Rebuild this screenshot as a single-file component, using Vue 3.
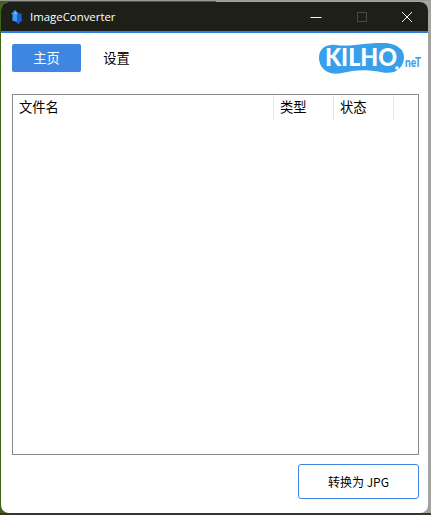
<script setup>
const columns = [
  { key: 'name', label: '文件名' },
  { key: 'type', label: '类型' },
  { key: 'status', label: '状态' },
  { key: 'rest', label: '' },
]
</script>

<template>
  <div class="desktop">
    <div class="window">
      <header class="titlebar">
        <svg class="app-icon" width="14" height="14" viewBox="0 0 14 14">
          <path d="M5 0 L9 4 H7.5 V11 H2.5 V4 H1 Z" fill="#3f9bf0" />
          <path d="M8.5 14 L13 9.5 H11.5 V3.5 H8 V11 H4 Z" fill="#1a5fcf" />
          <path d="M5 1.5 L7 4 H5 Z" fill="#8fd0fa" />
        </svg>
        <span class="app-title">ImageConverter</span>
        <div class="controls">
          <span class="ctl"><svg width="12" height="12" viewBox="0 0 12 12"><path d="M0.5 6.5H11.5" stroke="#f2f2f2" stroke-width="1" /></svg></span>
          <span class="ctl"><svg width="12" height="12" viewBox="0 0 12 12"><rect x="1.5" y="1.5" width="9" height="9" fill="none" stroke="#4a4a44" stroke-width="1" /></svg></span>
          <span class="ctl"><svg width="12" height="12" viewBox="0 0 12 12"><path d="M1 1L11 11M11 1L1 11" stroke="#f2f2f2" stroke-width="1" /></svg></span>
        </div>
      </header>

      <main class="content">
        <nav class="toolbar">
          <button class="tab active">主页</button>
          <button class="tab">设置</button>
          <svg class="logo" width="106" height="34" viewBox="0 0 106 34">
            <path d="M0 16 C0 5 9 2 17 3 C31 5 44 1 62 1 C76 0 86 7 85 16 C84 28 74 33 62 30 C46 27 35 28 23 31 C10 34 0 27 0 16 Z" fill="#38a0ea" />
            <text x="6" y="24" class="logo-main" textLength="72" lengthAdjust="spacingAndGlyphs">KILHO</text>
            <circle cx="78" cy="26" r="1.8" fill="#fff" />
            <text x="86" y="25" class="logo-sub" textLength="16" lengthAdjust="spacingAndGlyphs">neT</text>
          </svg>
        </nav>

        <section class="table">
          <div class="thead">
            <div v-for="col in columns" :key="col.key" class="th" :class="'th-' + col.key">{{ col.label }}</div>
          </div>
        </section>

        <footer class="actions">
          <button class="convert">转换为 JPG</button>
        </footer>
      </main>
    </div>
  </div>
</template>

<style>
html, body { margin: 0; padding: 0; overflow: hidden; }
</style>

<style scoped>
.desktop {
  width: 431px;
  height: 515px;
  box-sizing: border-box;
  padding: 2px 3px 2px 1px;
  background:
    linear-gradient(#9a9a96, #9a9a96) 0 0 / 100% 1px no-repeat,
    linear-gradient(#34362c, #34362c) 0 100% / 100% 2px no-repeat,
    linear-gradient(90deg, #3f6414 0 50%, #a3a3a0 50% 100%);
  font-family: "Noto Sans CJK SC", "Noto Sans", sans-serif;
}
.window {
  height: 100%;
  display: flex;
  flex-direction: column;
  border-radius: 8px;
  overflow: hidden;
  background: #fff;
}
.titlebar {
  height: 29px;
  flex: none;
  display: flex;
  align-items: center;
  padding-left: 9px;
  background: #1e1f19;
  border-bottom: 2px solid #2c7fe2;
  color: #fff;
}
.app-icon { flex: none; }
.app-title {
  margin-left: 6px;
  font-family: "Open Sans", sans-serif;
  font-size: 11.4px;
}
.controls { margin-left: auto; display: flex; gap: 3.5px; }
.ctl {
  width: 42px;
  height: 29px;
  display: flex;
  align-items: center;
  justify-content: center;
}
.content {
  flex: 1;
  min-height: 0;
  display: flex;
  flex-direction: column;
  padding: 11px 9px 14px 11px;
}
.toolbar {
  display: flex;
  align-items: flex-start;
  height: 50px;
  flex: none;
}
.tab {
  width: 69px;
  height: 28px;
  margin-right: 1px;
  padding: 0 0 2px 0;
  border: 0;
  border-radius: 2px;
  background: transparent;
  color: #000;
  font: 13.3px "Noto Sans CJK SC", sans-serif;
}
.tab.active { background: #3f86e0; color: #fff; }
.logo { margin-left: auto; margin-right: -6px; margin-top: -2px; }
.logo-main {
  font: 900 25px Lato, "Liberation Sans", sans-serif;
  fill: #fff;
}
.logo-sub {
  font: 900 13px Lato, "Liberation Sans", sans-serif;
  fill: #38a0ea;
}
.table {
  flex: 1;
  min-height: 0;
  border: 1px solid #8a8a8a;
  background: #fff;
}
.thead { display: flex; height: 25px; }
.th {
  box-sizing: border-box;
  padding-left: 6px;
  font-size: 13.3px;
  line-height: 24px;
  color: #000;
  border-right: 1px solid #e6e6e6;
}
.th-name { width: 261px; }
.th-type { width: 60px; }
.th-status { width: 60px; }
.th-rest { flex: 1; border-right: 0; }
.actions {
  display: flex;
  justify-content: flex-end;
  margin-top: 9px;
  flex: none;
}
.convert {
  width: 121px;
  height: 35px;
  padding: 0;
  box-sizing: border-box;
  border: 1px solid #3f86e0;
  border-radius: 3px;
  background: #fff;
  color: #000;
  font: 12px "Noto Sans CJK SC", sans-serif;
}
</style>
